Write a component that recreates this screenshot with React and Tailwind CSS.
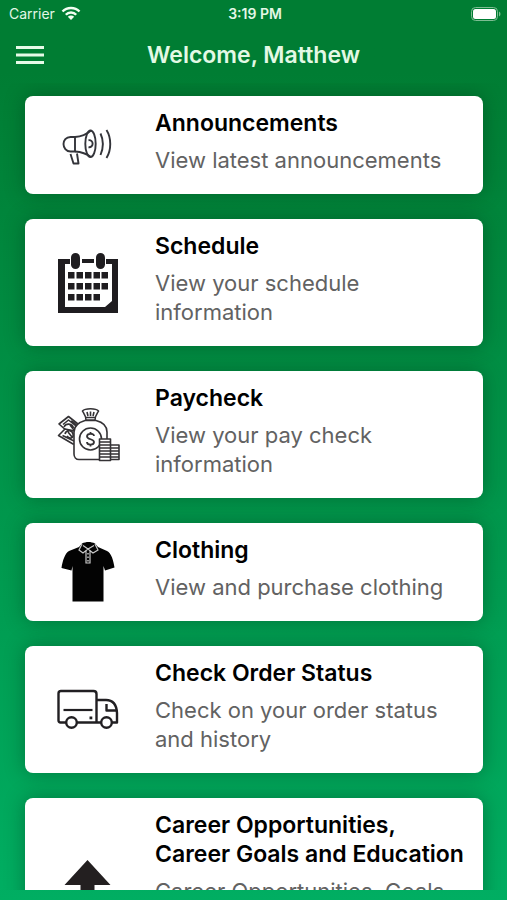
import React from 'react';

const AnnouncementIcon = () => (
  <svg viewBox="0 0 64 64" className="w-16 h-16" fill="none" stroke="#33343a" strokeWidth="1.9" strokeLinejoin="round">
    <path d="M19 24H14.5C10 24 7.5 27.500 7.500 31S10 38.500 14.500 38.500H19Z" />
    <path d="M19 24C26 23.500 31 21 35 17.500M19 38.500C26 39 31 41 35 44" />
    <ellipse cx="34.5" cy="30.8" rx="5.2" ry="13.3" />
    <path d="M32.500 27.200c5.500-0.600 5.500 7.600 0 7" />
    <path d="M14.500 41L17.500 50.500H22.500L21 40.500" />
    <path d="M44.500 20.500C47.500 27 47.500 35 44.500 42M50.500 17C55.500 25 55.500 37 50.500 45" />
  </svg>
);

const ScheduleIcon = () => (
  <svg viewBox="0 0 64 64" className="w-16 h-16" fill="#1f1d20">
    <path d="M2 8H14V13H9V56H49L56 50V13H50V8H62V62H2Z" />
    <rect x="15" y="2" width="9" height="16" rx="4.500" />
    <rect x="40" y="2" width="9" height="16" rx="4.500" />
    <path d="M26 8h12v4H26z" />
    {[21, 32, 43].map((y, row) =>
      [12, 20.5, 29, 37.5, 45.5].slice(0, row === 2 ? 4 : 5).map((x) => (
        <rect key={`${x}-${y}`} x={x} y={y} width="6.500" height="6.500" />
      ))
    )}
  </svg>
);

const PaycheckIcon = () => (
  <svg viewBox="0 0 64 64" className="w-16 h-16" fill="none" stroke="#343235" strokeWidth="1.6" strokeLinejoin="round">
    <g fill="#fff">
      <path d="M3 21L12.500 13.500L27 25L20 36Z" />
      <path d="M2.500 32.500L9 26L24 29L22 41L17 41Z" />
    </g>
    <path d="M7 21.500L12.500 17L20 23M8 24c2-4 8-4 9.500 1M6.500 32.500L18 38M9 31c1-4 7-5 8 0s-4 5-6 2M14 22l4 5M12 29l4 5M15 18c3 1 5 3 6 6" />
    <path d="M18 51V29C18 21.500 24 19 29 17.500H40C46 19 51 22 51 29V51C51 54 49 56.500 46 56.500H23C20 56.500 18 54 18 51Z" fill="#fff" />
    <path d="M30 17C30 13 28 10.500 26.500 8C29 5 40 5 42.500 8C41 10.500 39 13 39 17Z" fill="#fff" />
    <path d="M30 14.500H39M31 9L32 13M34.500 8.500V13M38 9L37 13" />
    <circle cx="34.500" cy="36" r="11" />
    <path d="M38 33C38 30 31 30 31 33.200C31 37 38 35.500 38 39C38 42.500 31 42.500 31 39M34.500 29V31M34.500 41V43.500" strokeWidth="1.800" />
    <path d="M43.500 36h11V57.500H43.500Z M54.500 42h8.500V56.500H54.500Z" fill="#fff" />
    <path d="M43.500 39h11M43.500 42h11M43.500 45h11M43.500 48h11M43.500 51h11M43.500 54h11M54.500 45h8.500M54.500 48h8.500M54.500 51h8.500M54.500 54h8.500" strokeWidth="1.400" />
  </svg>
);

const ClothingIcon = () => (
  <svg viewBox="0 0 64 64" className="w-16 h-16">
    <path
      d="M26 3.500C30 1.500 35 1.500 39 3.500L42 7L51 11C55.500 13 57.500 21 58.500 27.500L49 30.500L47.500 26V61.500H16.500V26L15.500 30.500L5.500 28C6.500 21 9 13 13 11L23 7Z"
      fill="#030303"
    />
    <path
      d="M26 4C25 6 24 8 23 10L27 13L32 9L37 13L42 10L39 4M27 5.500L32 9L38 5.500M30 10V23H34V10"
      fill="none"
      stroke="#c9c9c9"
      strokeWidth="1.200"
    />
    <path d="M32 13v1.500M32 16.500v1.500M32 20v1.500" stroke="#ddd" strokeWidth="1.300" />
  </svg>
);

const TruckIcon = () => (
  <svg viewBox="0 0 64 64" className="w-16 h-16" fill="none" stroke="#211f22" strokeWidth="2.400" strokeLinejoin="round">
    <path d="M10 44.500H4.500Q2.500 44.500 2.500 42.500V15.500Q2.500 13 5 13H37.500Q40.500 13 40.500 16V44.500H21M40.500 22H50C56 22 60.500 26 61 35V44.500H56M40.500 44.500H45" />
    <path d="M50.500 26V32.500H60.500" strokeWidth="2.400" />
    <path d="M7.500 32H36.500" strokeWidth="2.200" />
    <circle cx="15.500" cy="44.500" r="5.300" />
    <circle cx="50.500" cy="44.500" r="5.300" />
    <path d="M33.500 38.500h2.800v2.800h-2.800z" fill="#211f22" stroke="none" />
  </svg>
);

const CareerIcon = () => (
  <svg viewBox="0 0 64 64" className="w-16 h-16" fill="#231f20">
    <path d="M31.500 1L54.500 26H38.500V62H24.500V26H8.500Z" />
  </svg>
);

const menuItems = [
  { title: 'Announcements', description: 'View latest announcements', Icon: AnnouncementIcon },
  { title: 'Schedule', description: 'View your schedule information', Icon: ScheduleIcon },
  { title: 'Paycheck', description: 'View your pay check information', Icon: PaycheckIcon },
  { title: 'Clothing', description: 'View and purchase clothing', Icon: ClothingIcon },
  { title: 'Check Order Status', description: 'Check on your order status and history', Icon: TruckIcon },
  {
    title: 'Career Opportunities, Career Goals and Education',
    description: 'Career Opportunities, Goals and Education information for all of our team members',
    Icon: CareerIcon,
  },
];

const StatusBar = () => (
  <div className="grid grid-cols-3 items-center h-[27px] pl-[9px] pr-[6px] text-sm text-[#e3f7e6]">
    <div className="flex items-center gap-[6px]">
      <span>Carrier</span>
      <svg viewBox="0 0 20 15" className="w-5 h-[15px]" fill="none" stroke="#f2fff2" strokeWidth="2.400">
        <path d="M1.500 5.500C6 0.800 14 0.800 18.500 5.500M4.800 8.800C7.600 5.800 12.400 5.800 15.200 8.800" />
        <path d="M10 14L6.800 10.800C8.600 9 11.400 9 13.200 10.800Z" fill="#f2fff2" stroke="none" />
      </svg>
    </div>
    <span className="text-center font-semibold">3:19 PM</span>
    <svg viewBox="0 0 30 14" className="w-[30px] h-[14px] justify-self-end">
      <rect x="0.500" y="0.500" width="26" height="13" rx="4" fill="none" stroke="#7dbd92" />
      <rect x="2" y="2" width="23" height="10" rx="2.500" fill="#fff" />
      <path d="M28 4.500C30 5.500 30 8.500 28 9.500Z" fill="#7dbd92" />
    </svg>
  </div>
);

const MenuCard = ({ title, description, Icon }) => (
  <a
    href="#"
    className="flex items-center shrink-0 rounded-lg bg-white py-[13px] pr-3 shadow-[0_0_20px_rgba(0,50,20,0.4)]"
  >
    <div className="flex justify-center shrink-0 w-[125px] mr-[5px]">
      <Icon />
    </div>
    <div className="flex flex-col gap-2 min-w-0 pb-[6px]">
      <h2 className="text-[23px] leading-[29px] font-semibold text-black">{title}</h2>
      <p className="text-[22px] leading-[29px] text-[#626262]">{description}</p>
    </div>
  </a>
);

export default function App() {
  return (
    <div className="flex flex-col h-screen overflow-hidden pb-[10px] bg-linear-to-b from-[#007d33] from-8% to-[#00ae62] font-[Inter,'Liberation_Sans',sans-serif]">
      <header>
        <StatusBar />
        <div className="grid grid-cols-[1fr_auto_1fr] items-center h-14 px-4">
          <button type="button" aria-label="Open menu" className="justify-self-start">
            <svg viewBox="0 0 28 20" className="w-7 h-5" stroke="#e6fbe8" strokeWidth="3">
              <path d="M0 2.500H28M0 10H28M0 17.500H28" />
            </svg>
          </button>
          <h1 className="text-[23px] font-semibold text-[#e3f9e5]">Welcome, Matthew</h1>
        </div>
      </header>
      <main className="flex flex-col flex-1 min-h-0 gap-[25px] overflow-y-auto pt-[13px] pl-[25px] pr-6 [scrollbar-width:none]">
        {menuItems.map((item) => (
          <MenuCard key={item.title} {...item} />
        ))}
      </main>
    </div>
  );
}
